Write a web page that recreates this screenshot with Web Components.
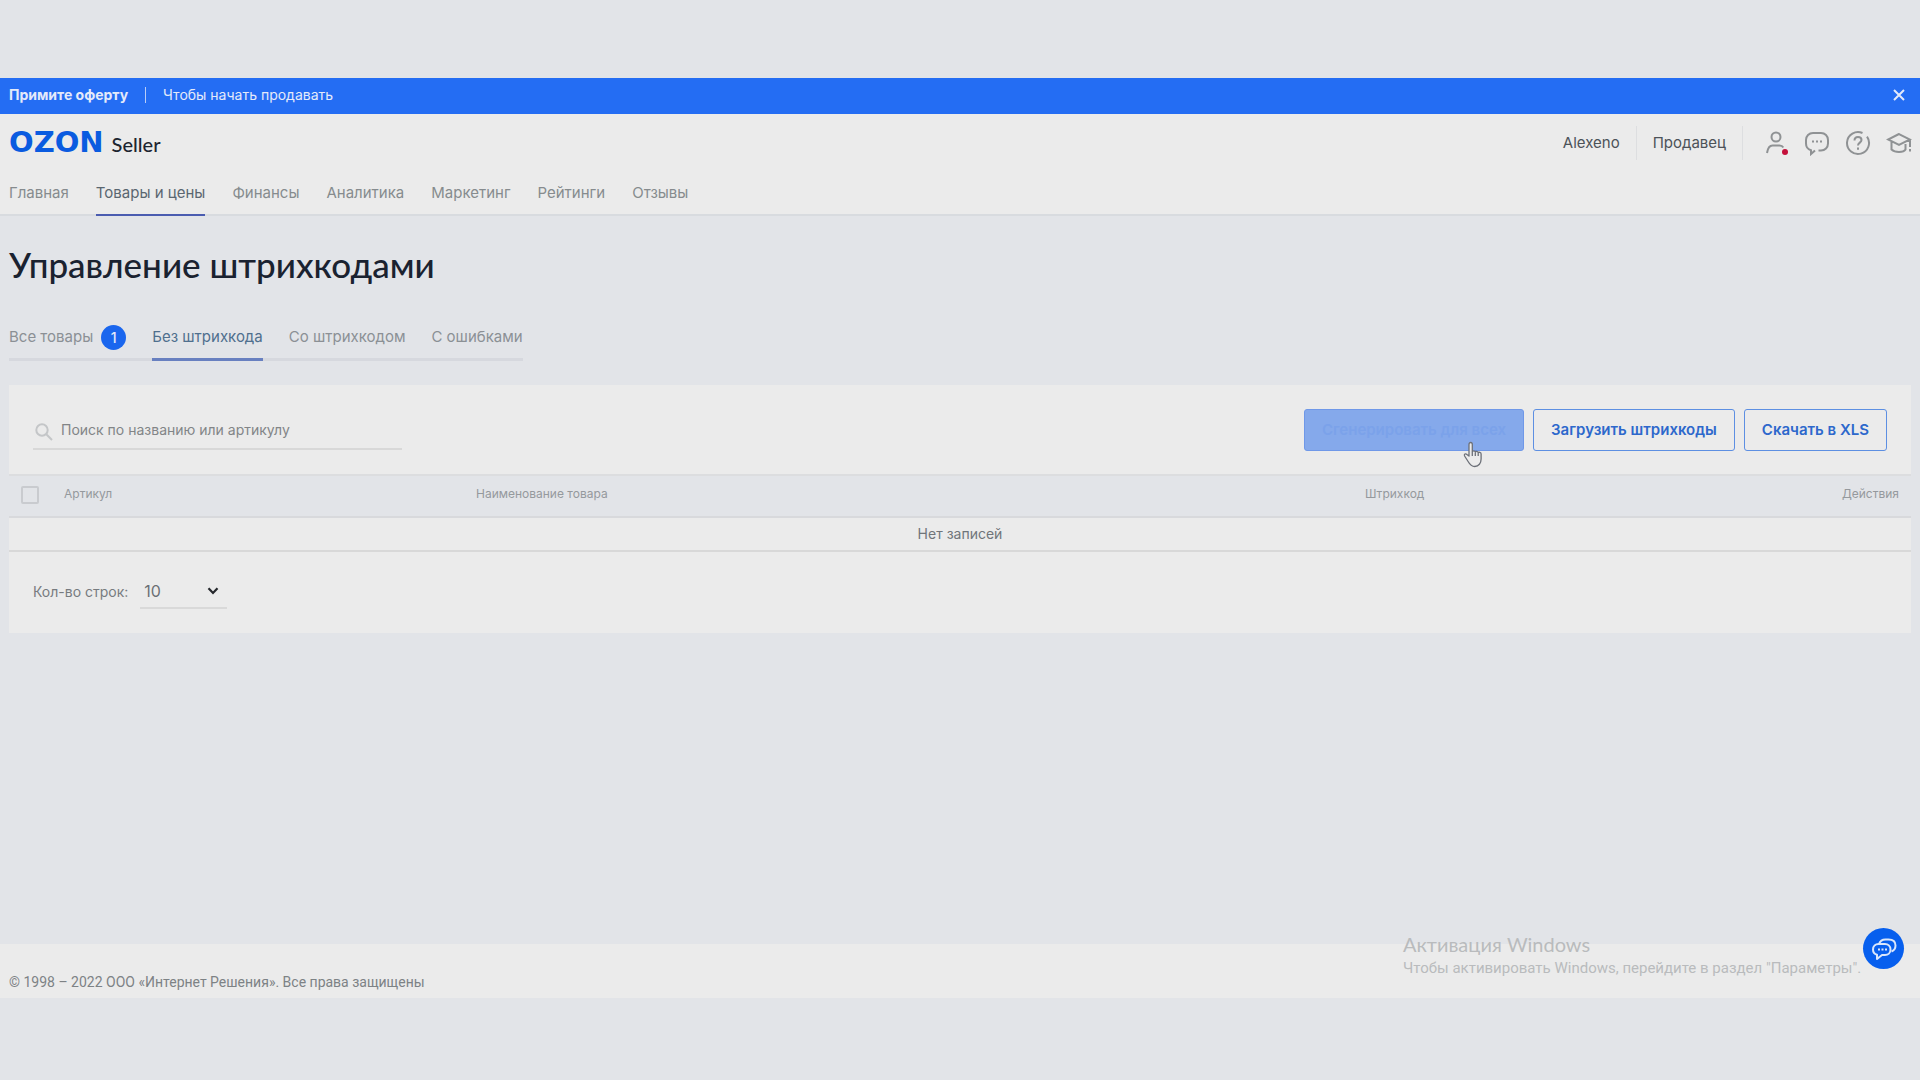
<!DOCTYPE html>
<html lang="ru">
<head>
<meta charset="utf-8">
<title>Управление штрихкодами</title>
<style>
  html { height: 100%; }
  body { margin: 0; min-height: 100%; display: grid; background: #e2e4e8; font-family: Inter, "Liberation Sans", sans-serif; font-size: 15px; line-height: 20px; color: #5d6469; }
</style>
</head>
<body>
<seller-app></seller-app>
<script>
const define = (name, css, html) => {
  const template = document.createElement('template');
  template.innerHTML = `<style>*{box-sizing:border-box}:host{display:block;box-sizing:border-box}svg{display:block}a{color:inherit;text-decoration:none}button{font:inherit;cursor:pointer}${css}</style>${html}`;
  customElements.define(name, class extends HTMLElement {
    constructor() {
      super();
      this.attachShadow({ mode: 'open' }).append(template.content.cloneNode(true));
    }
  });
};

define('offer-banner', `
  :host { display: flex; align-items: center; height: 36px; padding: 0 12px 2px 9px; background: #246df3; color: #e4eafa; font-size: 14px; }
  a { font-weight: 700; }
  span { margin-left: 17px; padding-left: 17px; border-left: 1px solid #b9cdf7; line-height: 16px; }
  button { margin-left: auto; padding: 3px; border: 0; background: none; color: inherit; }
`, `
  <a href="#offer">Примите оферту</a><span>Чтобы начать продавать</span>
  <button type="button" aria-label="Закрыть"><svg width="12" height="12" viewBox="0 0 12 12" fill="none" stroke="currentColor" stroke-width="2"><path d="M1 1l10 10M11 1L1 11"/></svg></button>
`);

define('seller-logo', `
  a { display: flex; align-items: baseline; gap: 8px; line-height: 32px; }
  b { font: 700 29px/32px "DejaVu Sans", sans-serif; color: #0a5be0; }
  span { font: 500 20px/32px Lato, sans-serif; color: #1d2530; }
`, `<a href="#home"><b>OZON</b><span>Seller</span></a>`);

define('account-bar', `
  :host { display: flex; align-items: center; height: 34px; color: #4c5258; }
  a { display: flex; align-items: center; height: 34px; padding: 0 16px; border-right: 1px solid #dddee0; }
  nav { display: flex; gap: 15px; margin-left: 20px; }
  button { padding: 0; border: 0; background: none; color: #8f9294; }
  svg { fill: none; stroke: currentColor; stroke-width: 2; }
`, `
  <a href="#user">Alexeno</a><a href="#seller">Продавец</a>
  <nav>
    <button type="button" aria-label="Профиль"><svg width="26" height="26" viewBox="0 0 26 26"><circle cx="13" cy="7" r="4.5"/><path d="M4 23c.8-5 2.300-7.500 5.500-7.500h7c1.800 0 3 .6 3.800 2"/><circle cx="22" cy="22" r="3" fill="#c4103a" stroke="none"/></svg></button>
    <button type="button" aria-label="Сообщения"><svg width="26" height="26" viewBox="0 0 26 26"><path d="M14.500 20.500H17c4 0 7-3 7-7V10c0-4-3-7-7-7H9C5 3 2 6 2 10v3.500c0 3.400 2 5.800 5 6.700V24l4-3.600"/><path d="M8 11.500h2M12 11.500h2M16 11.500h2"/></svg></button>
    <button type="button" aria-label="Помощь"><svg width="26" height="26" viewBox="0 0 26 26"><path d="M17.500 3A11 11 0 1 0 22 6.700"/><path d="M9.500 10.500c0-2.300 1.400-3.500 3.500-3.500s3.500 1.300 3.500 3.100c0 2.500-3.500 2.600-3.500 5.400M13 17.500v2.200"/></svg></button>
    <button type="button" aria-label="Обучение"><svg width="26" height="26" viewBox="0 0 26 26"><path d="M13 4L2 9.500 13 15l11-5.500zM5.500 12v7.500c2 1.800 4.500 2.500 7.500 2.500s5.500-.7 6.500-2.500V14M24 10v7M24 19v2.500"/></svg></button>
  </nav>
`);

define('main-nav', `
  nav { display: flex; gap: 27px; }
  a { padding: 12px 0 11px; border-bottom: 2px solid transparent; margin-bottom: -2px; color: #868b8e; }
  a[aria-current] { color: #5a6670; border-color: #4a5cb0; }
`, `<nav>
  <a href="#main">Главная</a><a href="#goods" aria-current="page">Товары и цены</a><a href="#finance">Финансы</a><a href="#analytics">Аналитика</a><a href="#marketing">Маркетинг</a><a href="#ratings">Рейтинги</a><a href="#reviews">Отзывы</a>
</nav>`);

define('site-header', `
  :host { background: #ebebeb; border-bottom: 2px solid #d8dbdf; padding: 0 9px; }
  div { display: flex; justify-content: space-between; align-items: center; height: 57px; margin-right: -1px; }
`, `<div><seller-logo></seller-logo><account-bar></account-bar></div><main-nav></main-nav>`);

define('barcode-tabs', `
  :host { display: flex; }
  nav { display: flex; gap: 26px; border-bottom: 3px solid #d6d8de; }
  a { display: flex; align-items: center; gap: 8px; height: 45px; margin-bottom: -3px; border-bottom: 3px solid transparent; color: #8b9095; }
  a[aria-current] { color: #4f6f8e; border-color: #6880c0; }
  b { width: 25px; border-radius: 50%; background: #1a66ee; color: #e4eafa; text-align: center; line-height: 25px; font-size: 14px; font-weight: 500; }
`, `<nav>
  <a href="#all">Все товары <b>1</b></a><a href="#without" aria-current="page">Без штрихкода</a><a href="#with">Со штрихкодом</a><a href="#errors">С ошибками</a>
</nav>`);

define('search-field', `
  label { display: flex; align-items: center; gap: 8px; width: 369px; height: 40px; padding: 2px 0 0 2px; border-bottom: 2px solid #d8d8d8; }
  svg { margin-top: 3px; }
  input { flex: 1; min-width: 0; padding: 0; border: 0; outline: 0; background: none; font: inherit; font-size: 14px; color: #5d6469; }
  input::placeholder { color: #828587; opacity: 1; }
`, `<label><svg width="18" height="18" viewBox="0 0 18 18" fill="none" stroke="#c4c6c8" stroke-width="2"><circle cx="7" cy="7" r="5.700"/><path d="M11.300 11.300L17 17"/></svg>
<input type="search" aria-label="Поиск" placeholder="Поиск по названию или артикулу"></label>`);

define('bulk-actions', `
  :host { position: relative; display: flex; gap: 9px; }
  button { height: 42px; padding: 0 17px; border: 1px solid #5d8fe2; border-radius: 3px; background: none; color: #2d68cc; font-size: 15px; font-weight: 600; }
  button:disabled { background: #85a9eb; border-color: #6f98e8; color: #7ba2ea; }
  svg { position: absolute; left: 159px; top: 32px; }
`, `<button type="button" disabled>Сгенерировать для всех</button><button type="button">Загрузить штрихкоды</button><button type="button">Скачать в XLS</button>
<svg width="20" height="27" viewBox="0 0 20 27" fill="#ececec" stroke="#6c7078" stroke-width="1.300" stroke-linejoin="round"><path d="M6 15V3.500C6 .8 9.300.8 9.300 3.500V11c.2-1.700 3-1.600 3 .3.300-1.400 2.900-1.200 2.900.7.400-1.200 2.900-1 2.900 1v5c0 4-2.400 7.500-6.300 7.500-3.500 0-5-2-6.700-5l-3.500-5.500c-.9-1.700.9-2.900 2.300-1.600zM9.300 11v4M12.300 12v3M15.200 12.500V15"/></svg>`);

define('product-table', `
  table { width: 100%; border-collapse: collapse; table-layout: fixed; }
  th { height: 42px; padding: 0 12px 4px; border-top: 2px solid #dcdddf; border-bottom: 2px solid #d8d9dc; background: #e2e4e8; color: #95999d; font-size: 12px; font-weight: 400; text-align: left; line-height: 16px; }
  th:last-child { text-align: right; }
  td { height: 34px; padding: 0; border-bottom: 2px solid #d8d8d8; text-align: center; font-size: 14px; color: #70757a; }
  .check { width: 43px; } .sku { width: 21.660%; } .name { width: 46.740%; } .acts { width: 100px; }
  th.check { padding-bottom: 2px; }
  input { appearance: none; display: block; width: 18px; height: 18px; margin: 0; border: 2px solid #c9cbcf; border-radius: 2px; }
`, `<table>
  <thead><tr><th class="check"><input type="checkbox" aria-label="Выбрать все"></th><th class="sku">Артикул</th><th class="name">Наименование товара</th><th>Штрихкод</th><th class="acts">Действия</th></tr></thead>
  <tbody><tr><td colspan="5">Нет записей</td></tr></tbody>
</table>`);

define('page-size', `
  :host { display: flex; align-items: center; gap: 12px; padding: 23px 24px 24px; color: #777b7f; font-size: 14px; }
  div { display: grid; align-items: center; width: 87px; height: 34px; border-bottom: 2px solid #d9d9d9; }
  select, svg { grid-area: 1 / 1; }
  select { appearance: none; width: 100%; padding: 0 4px; border: 0; outline: 0; background: none; font: inherit; font-size: 16px; color: #6b7075; }
  svg { justify-self: end; margin-right: 8px; pointer-events: none; }
`, `<label for="rows">Кол-во строк:</label><div><select id="rows"><option>10</option><option>20</option><option>50</option></select><svg width="12" height="8" viewBox="0 0 12 8" fill="none" stroke="#25282c" stroke-width="2.200"><path d="M1.500 1.200L6 6l4.500-4.800"/></svg></div>`);

define('barcode-card', `
  :host { background: #ebebeb; margin-top: 24px; }
  .tools { display: flex; justify-content: space-between; align-items: center; padding: 24px 24px 23px; }
`, `<div class="tools"><search-field></search-field><bulk-actions></bulk-actions></div><product-table></product-table><page-size></page-size>`);

define('site-footer', `
  :host { display: flex; align-items: center; height: 54px; padding: 22px 9px 0; background: #ebebeb; color: #7d8285; font-family: Roboto, sans-serif; font-size: 14px; }
`, `© 1998 – 2022 ООО «Интернет Решения». Все права защищены`);

define('windows-notice', `
  :host { position: absolute; right: 51px; bottom: 20px; width: 466px; white-space: nowrap; color: #b9bbbd; font-family: Roboto, sans-serif; font-size: 15px; line-height: 20px; pointer-events: none; }
  p { margin: 0; }
  .head { font-family: Lato, sans-serif; font-size: 20px; line-height: 28px; }
`, `<p class="head">Активация Windows</p><p>Чтобы активировать Windows, перейдите в раздел "Параметры".</p>`);

define('chat-button', `
  :host { position: absolute; right: 16px; bottom: 29px; }
  button { display: grid; place-items: center; width: 41px; height: 41px; padding: 0; border: 0; border-radius: 50%; background: #075fee; color: #d9e6fb; }
`, `<button type="button" aria-label="Чат"><svg width="26" height="26" viewBox="0 0 26 26" fill="none" stroke="currentColor" stroke-width="2"><path d="M8 8c1-3 3-4.500 6.500-4.500h3C22 3.500 24.500 6 24.500 9.500c0 3-1.500 5-4 6"/><path d="M11 19h3c3 0 5.500-2.200 5.500-5.500S17 8 14 8H7.500C4.500 8 2 10.200 2 13.500c0 2.700 1.600 4.600 4 5.300V23l5-4z" stroke-linejoin="round"/><path d="M7 13.500h2M10.500 13.500h2M14 13.500h2"/></svg></button>`);

define('seller-app', `
  :host { display: flex; flex-direction: column; padding: 78px 0 82px; }
  .page { position: relative; flex: 1; display: flex; flex-direction: column; }
  main { flex: 1; padding: 26px 9px; }
  h1 { margin: 0 0 30px; font: 500 35px/44px Lato, sans-serif; color: #1a2230; }
`, `<div class="page"><offer-banner></offer-banner><site-header></site-header>
<main><h1>Управление штрихкодами</h1><barcode-tabs></barcode-tabs><barcode-card></barcode-card></main>
<site-footer></site-footer><windows-notice></windows-notice><chat-button></chat-button></div>`);
</script>
</body>
</html>
